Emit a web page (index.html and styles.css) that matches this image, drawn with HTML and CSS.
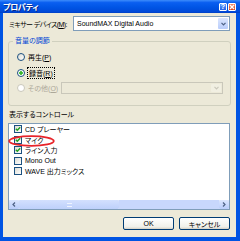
FILE: index.html
```html
<!DOCTYPE html>
<html lang="ja">
<head>
    <meta charset="UTF-8">
    <title>プロパティ</title>
    <link rel="stylesheet" href="styles.css">
</head>
<body>
    <div class="window">
        <div class="titlebar">
            <span class="title">プロパティ</span>
            <div class="tb-buttons">
                <span class="tb-btn help">?</span>
                <span class="tb-btn close">
                    <svg width="6" height="6" viewBox="0 0 6 6"><path d="M1 1L5 5M5 1L1 5" stroke="#fff" stroke-width="1.4"/></svg>
                </span>
            </div>
        </div>

        <div class="client">
            <div class="device-row">
                <span class="device-label">ミキサー デバイス(<u>M</u>):</span>
                <div class="combo device-combo">
                    <span class="combo-text">SoundMAX Digital Audio</span>
                    <span class="combo-btn">
                        <svg width="5" height="4" viewBox="0 0 5 4"><path d="M0.5 0.8L2.5 2.8L4.5 0.8" fill="none" stroke="#4d6185" stroke-width="1.2"/></svg>
                    </span>
                </div>
            </div>

            <fieldset class="group">
                <legend>音量の調節</legend>
                <div class="group-body">
                    <div class="radio-row">
                        <span class="radio"></span>
                        <span>再生(<u>P</u>)</span>
                    </div>
                    <div class="radio-row">
                        <span class="radio checked"></span>
                        <span class="focus">録音(<u>R</u>)</span>
                    </div>
                    <div class="radio-row disabled">
                        <span class="radio"></span>
                        <span>その他(<u>O</u>)</span>
                        <div class="combo other-combo">
                            <span class="combo-text"></span>
                            <span class="combo-btn">
                                <svg width="5" height="4" viewBox="0 0 5 4"><path d="M0.5 0.8L2.5 2.8L4.5 0.8" fill="none" stroke="#c9c7ba" stroke-width="1.2"/></svg>
                            </span>
                        </div>
                    </div>
                </div>
            </fieldset>

            <div class="list-label">表示するコントロール</div>
            <div class="listbox">
                <ul class="items">
                    <li><span class="check on"></span>CD プレーヤー</li>
                    <li><span class="check on"></span>マイク</li>
                    <li><span class="check on"></span>ライン入力</li>
                    <li><span class="check"></span>Mono Out</li>
                    <li><span class="check"></span>WAVE 出力ミックス</li>
                </ul>
                <div class="hscroll">
                    <span class="sb-btn">
                        <svg width="4" height="5" viewBox="0 0 4 5"><path d="M3 0.5L1 2.5L3 4.5" fill="none" stroke="#4d6185" stroke-width="1.2"/></svg>
                    </span>
                    <span class="sb-thumb"><span class="grip"></span></span>
                    <span class="sb-track"></span>
                    <span class="sb-btn">
                        <svg width="4" height="5" viewBox="0 0 4 5"><path d="M1 0.5L3 2.5L1 4.5" fill="none" stroke="#4d6185" stroke-width="1.2"/></svg>
                    </span>
                </div>
                <!-- red marker round "マイク" -->
                <svg class="marker" width="47" height="12" viewBox="0 0 47 12"><ellipse cx="23.5" cy="6" rx="22.3" ry="4.9" fill="none" stroke="#e8242a" stroke-width="1.8"/></svg>
            </div>

            <div class="buttons">
                <button class="btn">OK</button>
                <button class="btn">キャンセル</button>
            </div>
        </div>
    </div>
</body>
</html>
```

FILE: styles.css
```css
* {
    box-sizing: border-box;
}
body {
    margin: 0;
    font-family: "Liberation Sans", "Noto Sans CJK JP", sans-serif;
    font-size: 7px;
    font-feature-settings: "palt";
    white-space: nowrap;
    color: #000;
}
u {
    text-decoration: underline;
}
.window {
    width: 240px;
    height: 241px;
    display: flex;
    flex-direction: column;
    background: #0054e3;
}
/* title bar */
.titlebar {
    height: 13px;
    display: flex;
    align-items: center;
    justify-content: space-between;
    padding: 0 4px 0 3px;
    background: linear-gradient(#3d8cfb, #0a5ff0 20%, #0055e5 55%, #0049d8 90%, #003fc4);
}
.title {
    color: #fff;
    font-weight: bold;
    font-size: 8px;
    letter-spacing: -0.3px;
    text-shadow: 1px 1px 0 #0a2a8a;
}
.tb-buttons {
    display: flex;
    gap: 1px;
}
.tb-btn {
    width: 8px;
    height: 8px;
    border: 1px solid #fff;
    border-radius: 1px;
    display: flex;
    align-items: center;
    justify-content: center;
    color: #fff;
    font-weight: bold;
    font-size: 7px;
    line-height: 1;
}
.tb-btn.help {
    background: linear-gradient(#5a9bff, #2462e8);
}
.tb-btn.close {
    background: linear-gradient(#f08a6a, #d8421c);
}
/* dialog face */
.client {
    flex: 1;
    margin: 0 4px 4px 3px;
    background: #ece9d8;
    padding: 3px 6px 0 5px;
    display: flex;
    flex-direction: column;
}
.device-row {
    display: flex;
    align-items: center;
    height: 15px;
}
.device-label {
    flex: 1;
    min-width: 0;
    padding-left: 1px;
    letter-spacing: -0.6px;
}
.combo {
    display: flex;
    align-items: stretch;
    border: 1px solid #7f9db9;
    background: #fff;
}
.device-combo {
    flex: none;
    width: 157px;
    height: 15px;
}
.combo-text {
    flex: 1;
    padding-left: 3px;
    display: flex;
    align-items: center;
}
.combo-btn {
    width: 10px;
    margin: 1px;
    border-radius: 1px;
    background: linear-gradient(#dbe6fe, #b9cdfb);
    display: flex;
    align-items: center;
    justify-content: center;
}
/* group box */
.group {
    margin: 5px 0 0;
    padding: 0;
    height: 70px;
    border: 1px solid #d0d0bf;
    border-radius: 3px;
}
.group legend {
    margin-left: 4px;
    padding: 0 2px;
    line-height: 10px;
    color: #0046d5;
}
.group-body {
    padding: 5px 7px 0 8px;
    display: flex;
    flex-direction: column;
    gap: 3.5px;
}
.radio-row {
    height: 12px;
    display: flex;
    align-items: center;
    gap: 3px;
}
.radio {
    width: 8px;
    height: 8px;
    border: 1px solid #1c5180;
    border-radius: 50%;
    background: linear-gradient(135deg, #dcdcd4, #fff);
    flex: none;
}
.radio.checked {
    background: radial-gradient(circle, #21a121 0, #55c84a 1.6px, #fff 2px);
}
.focus {
    outline: 1px dotted #000;
    outline-offset: 0;
    padding: 0 1px;
}
.radio-row.disabled {
    color: #aca899;
}
.radio-row.disabled .radio {
    border-color: #cac8bb;
    background: #fff;
}
.other-combo {
    margin-left: auto;
    flex: none;
    width: 162px;
    height: 12px;
    border-color: #c9c7ba;
    background: #ece9d8;
}
.other-combo .combo-btn {
    background: #f1efe2;
}
/* controls list */
.list-label {
    margin-top: 4px;
    padding-left: 1px;
    line-height: 10px;
}
.listbox {
    position: relative;
    margin-top: 3px;
    height: 87px;
    border: 1px solid #7f9db9;
    background: #fff;
    display: flex;
    flex-direction: column;
}
.items {
    flex: 1;
    list-style: none;
    margin: 0;
    padding: 0;
}
.items li {
    height: 10.5px;
    display: flex;
    align-items: center;
    gap: 3px;
    padding-left: 5px;
}
.check {
    width: 8px;
    height: 8px;
    border: 1px solid #1c5180;
    background: linear-gradient(135deg, #dcdcd4, #fff);
    flex: none;
}
.check.on {
    background: url("data:image/svg+xml,%3Csvg xmlns='http://www.w3.org/2000/svg' width='6' height='6'%3E%3Cpath d='M0.8 2.8L2.3 4.3L5.2 1.2' fill='none' stroke='%2321a121' stroke-width='1.4'/%3E%3C/svg%3E") center no-repeat, linear-gradient(135deg, #dcdcd4, #fff);
}
.hscroll {
    height: 9px;
    display: flex;
    background: #f3f1ec;
}
.sb-btn {
    width: 10px;
    background: linear-gradient(#dbe6fe, #b9cdfb);
    border-radius: 1px;
    display: flex;
    align-items: center;
    justify-content: center;
}
.sb-thumb {
    width: 100px;
    background: linear-gradient(#d3e0fe, #bdd0fb);
    border-radius: 1px;
    display: flex;
    align-items: center;
    justify-content: center;
}
.grip {
    width: 5px;
    height: 4px;
    border-top: 1px solid #eef3fe;
    border-bottom: 1px solid #eef3fe;
}
.sb-track {
    flex: 1;
    background: #c8d7fc;
}
.marker {
    position: absolute;
    left: -1px;
    top: 11px;
}
/* OK / Cancel */
.buttons {
    margin-top: 7px;
    display: flex;
    justify-content: flex-end;
    gap: 5px;
}
.btn {
    width: 51px;
    height: 13px;
    padding: 0;
    font: inherit;
    border: 1px solid #003c74;
    border-radius: 2px;
    background: linear-gradient(#fff, #f0f0ea 80%, #d6d0c5);
    color: #000;
}
```
